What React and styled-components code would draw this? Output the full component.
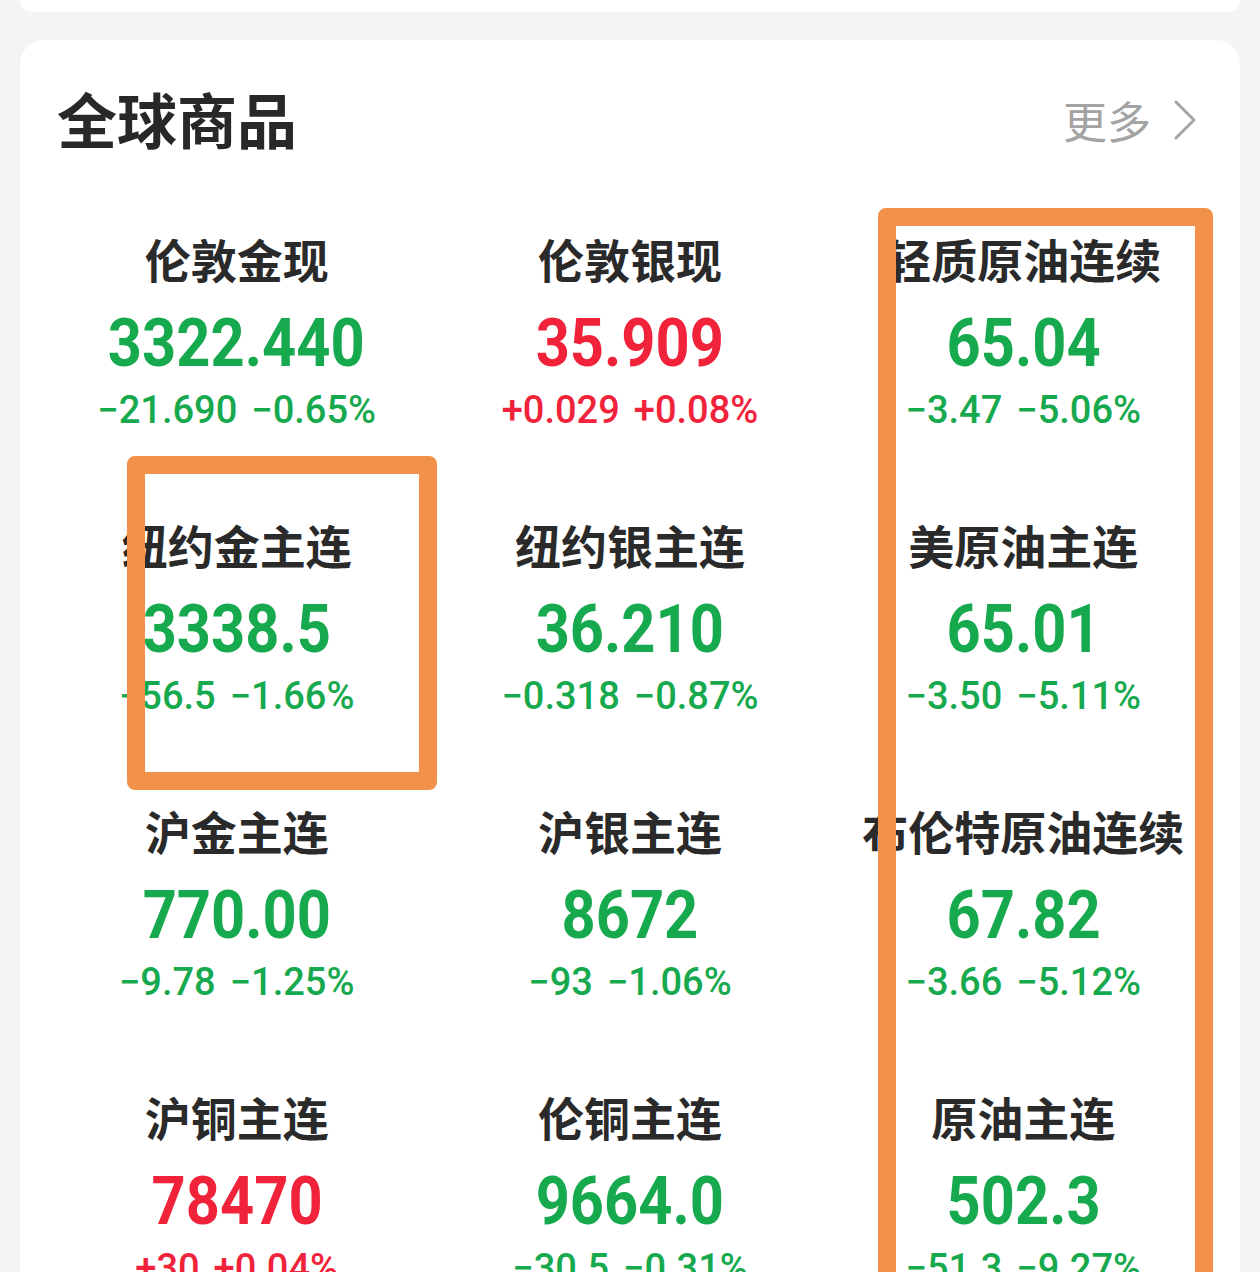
import React from "react";
import styled, { createGlobalStyle } from "styled-components";

const GlobalStyle = createGlobalStyle`
  html, body {
    margin: 0;
    padding: 0;
    background: #f4f4f4;
    overflow: hidden;
  }
  body {
    font-family: "Noto Sans CJK SC", "Noto Sans", sans-serif;
  }
`;

const UP = "#f0233b";
const DOWN = "#17a94e";

const items = [
  { name: "伦敦金现", price: "3322.440", change: "−21.690", pct: "−0.65%", up: false },
  { name: "伦敦银现", price: "35.909", change: "+0.029", pct: "+0.08%", up: true },
  { name: "轻质原油连续", price: "65.04", change: "−3.47", pct: "−5.06%", up: false },
  { name: "纽约金主连", price: "3338.5", change: "−56.5", pct: "−1.66%", up: false },
  { name: "纽约银主连", price: "36.210", change: "−0.318", pct: "−0.87%", up: false },
  { name: "美原油主连", price: "65.01", change: "−3.50", pct: "−5.11%", up: false },
  { name: "沪金主连", price: "770.00", change: "−9.78", pct: "−1.25%", up: false },
  { name: "沪银主连", price: "8672", change: "−93", pct: "−1.06%", up: false },
  { name: "布伦特原油连续", price: "67.82", change: "−3.66", pct: "−5.12%", up: false },
  { name: "沪铜主连", price: "78470", change: "+30", pct: "+0.04%", up: true },
  { name: "伦铜主连", price: "9664.0", change: "−30.5", pct: "−0.31%", up: false },
  { name: "原油主连", price: "502.3", change: "−51.3", pct: "−9.27%", up: false },
];

const Page = styled.div`
  position: relative;
  padding: 0 20px;
  height: 1272px;
`;

const TopCard = styled.div`
  height: 12px;
  background: #fff;
  border-radius: 0 0 24px 24px;
`;

const Card = styled.section`
  margin-top: 28px;
  background: #fff;
  border-radius: 24px;
  padding-bottom: 40px;
`;

const Header = styled.header`
  height: 194px;
  box-sizing: border-box;
  padding: 42px 43px 0 37px;
  display: flex;
  justify-content: space-between;
  align-items: flex-start;
`;

const Title = styled.h2`
  margin: 0;
  font-size: 60px;
  line-height: 72px;
  font-weight: 700;
  color: #282828;
`;

const More = styled.a`
  display: flex;
  align-items: center;
  gap: 22px;
  margin-top: 2px;
  font-size: 44px;
  line-height: 72px;
  color: #a3a3a3;
  text-decoration: none;
`;

const Grid = styled.div`
  display: grid;
  grid-template-columns: repeat(3, 1fr);
  padding: 0 20px;
`;

const Cell = styled.div`
  height: 286px;
  display: flex;
  flex-direction: column;
  align-items: center;
  white-space: nowrap;
`;

const Name = styled.div`
  margin-top: -4px;
  font-size: 46px;
  line-height: 56px;
  font-weight: 700;
  color: #2a2a2a;
`;

// condensed digits, DIN-like
const Price = styled.div`
  margin-top: 19px;
  font-family: Roboto, "DejaVu Sans", sans-serif;
  font-size: 67px;
  line-height: 76px;
  font-weight: 700;
  transform: scaleX(0.89);
  color: ${({ $up }) => ($up ? UP : DOWN)};
`;

const Change = styled.div`
  margin-top: 5px;
  display: flex;
  gap: 14px;
  font-family: Roboto, "DejaVu Sans", sans-serif;
  font-size: 38px;
  line-height: 48px;
  font-weight: 500;
  color: ${({ $up }) => ($up ? UP : DOWN)};
`;

const Mark = styled.div`
  position: absolute;
  left: ${({ $x }) => $x}px;
  top: ${({ $y }) => $y}px;
  width: ${({ $w }) => $w}px;
  height: ${({ $h }) => $h}px;
  box-sizing: border-box;
  border: 18px solid #f2924a;
  border-radius: 8px;
  pointer-events: none;
`;

const Chevron = () => (
  <svg width="24" height="40" viewBox="0 0 24 40" fill="none">
    <path d="M3 2 L21 20 L3 38" stroke="#a3a3a3" strokeWidth="3" strokeLinecap="round" strokeLinejoin="round" />
  </svg>
);

export default function App() {
  return (
    <>
      <GlobalStyle />
      <Page>
        <TopCard />
        <Card>
          <Header>
            <Title>全球商品</Title>
            <More href="#">
              更多
              <Chevron />
            </More>
          </Header>
          <Grid>
            {items.map((it) => (
              <Cell key={it.name}>
                <Name>{it.name}</Name>
                <Price $up={it.up}>{it.price}</Price>
                <Change $up={it.up}>
                  <span>{it.change}</span>
                  <span>{it.pct}</span>
                </Change>
              </Cell>
            ))}
          </Grid>
        </Card>
        <Mark $x={127} $y={456} $w={310} $h={334} />
        <Mark $x={878} $y={208} $w={335} $h={1200} />
      </Page>
    </>
  );
}
